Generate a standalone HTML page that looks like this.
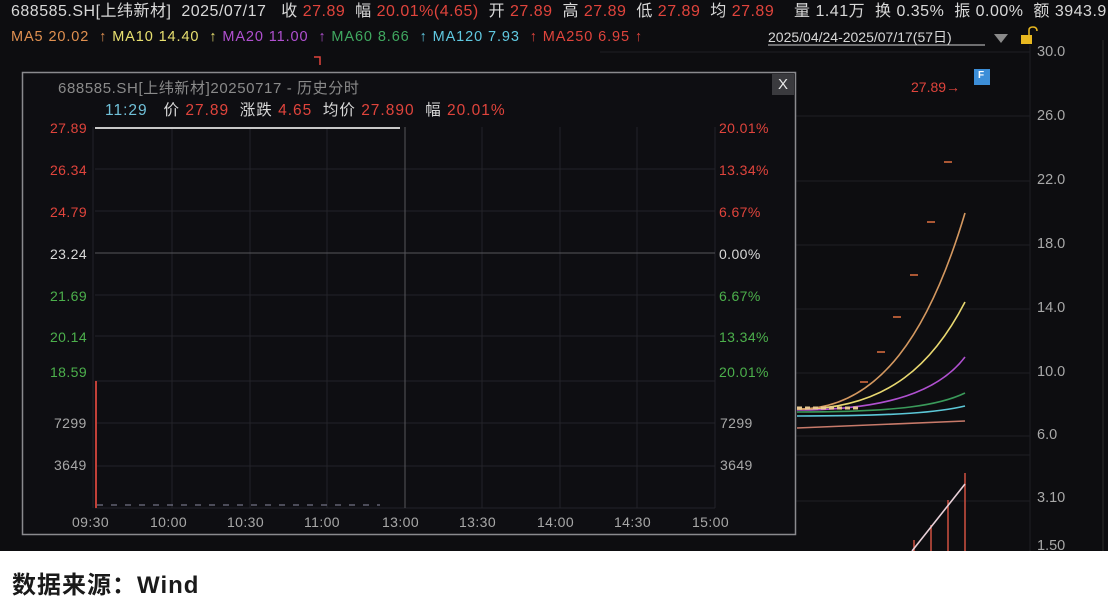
<!DOCTYPE html>
<html><head><meta charset="utf-8"><style>
*{margin:0;padding:0;box-sizing:border-box}
body{width:1108px;height:606px;overflow:hidden;background:#fff;font-family:"Liberation Sans","Noto Sans CJK SC",sans-serif;position:relative}
#dark{position:absolute;left:0;top:0;width:1108px;height:551px;background:#0d0d10}
.t{position:absolute;white-space:nowrap;line-height:1}
.w{color:#d8d8d8}.r{color:#e0443c}.g{color:#4cb04c}.gr{color:#a8a8a8}
.ax{font-size:14px;letter-spacing:0.4px}
svg{position:absolute;left:0;top:0}
</style></head><body>
<div id="dark"></div>
<svg width="1108" height="551">
 <g stroke="#1e1e24" stroke-width="1">
  <line x1="600" y1="52" x2="1030" y2="52"/><line x1="600" y1="116" x2="1030" y2="116"/>
  <line x1="796" y1="181" x2="1030" y2="181"/><line x1="796" y1="245" x2="1030" y2="245"/>
  <line x1="796" y1="309" x2="1030" y2="309"/><line x1="796" y1="373" x2="1030" y2="373"/>
  <line x1="796" y1="436" x2="1030" y2="436"/><line x1="796" y1="455" x2="1030" y2="455"/>
  <line x1="796" y1="501" x2="1030" y2="501"/>
  <line x1="1030" y1="45" x2="1030" y2="551"/>
 </g>
 <line x1="1103" y1="40" x2="1103" y2="551" stroke="#2a2a2a"/>
 <g fill="none" stroke-width="1.6">
  <path d="M797 428 L965 421" stroke="#c87a6a"/>
  <path d="M797 416 C900 416 940 412 965 406" stroke="#5cc8d8"/>
  <path d="M797 412 C900 412 940 405 965 393" stroke="#3a9a5a"/>
  <path d="M797 410 C890 410 940 390 965 357" stroke="#b050d0"/>
  <path d="M797 409 C890 410 935 360 965 302" stroke="#e8d870"/>
  <path d="M797 409 C880 410 930 330 965 213" stroke="#d49860"/>
 </g>
 <path d="M797 408 L860 408" stroke="#e8c890" stroke-width="3" stroke-dasharray="5 3"/>
 <g stroke="#e07040" stroke-width="1.5">
  <line x1="944" y1="162" x2="952" y2="162"/><line x1="927" y1="222" x2="935" y2="222"/>
  <line x1="910" y1="275" x2="918" y2="275"/><line x1="893" y1="317" x2="901" y2="317"/>
  <line x1="877" y1="352" x2="885" y2="352"/><line x1="860" y1="382" x2="868" y2="382"/>
 </g>
 <g stroke="#d05040" stroke-width="1.5">
  <line x1="965" y1="473" x2="965" y2="551"/><line x1="948" y1="500" x2="948" y2="551"/>
  <line x1="931" y1="525" x2="931" y2="551"/><line x1="914" y1="540" x2="914" y2="551"/>
 </g>
 <path d="M912 551 L965 484" stroke="#e8d0d8" stroke-width="1.6" fill="none"/>
 <path d="M314 57 L320 57 L320 65" stroke="#e0443c" fill="none" stroke-width="1.5"/>
 <rect x="22.5" y="72.5" width="773" height="462" fill="#0e0e12" stroke="#8a8a8e" stroke-width="1.5"/>
 <rect x="772" y="74" width="22" height="21" fill="#3a3a3e"/>
 <g stroke="#232329" stroke-width="1">
  <line x1="95" y1="169" x2="715" y2="169"/><line x1="95" y1="211" x2="715" y2="211"/>
  <line x1="95" y1="295" x2="715" y2="295"/><line x1="95" y1="336" x2="715" y2="336"/>
  <line x1="95" y1="381" x2="715" y2="381"/>
  <line x1="95" y1="423" x2="715" y2="423"/><line x1="95" y1="466" x2="715" y2="466"/>
  <line x1="95" y1="508" x2="715" y2="508"/>
  <line x1="172" y1="127" x2="172" y2="508"/><line x1="250" y1="127" x2="250" y2="508"/>
  <line x1="327" y1="127" x2="327" y2="508"/><line x1="482" y1="127" x2="482" y2="508"/>
  <line x1="560" y1="127" x2="560" y2="508"/><line x1="637" y1="127" x2="637" y2="508"/>
  <line x1="715" y1="127" x2="715" y2="508"/><line x1="93" y1="127" x2="93" y2="508"/>
 </g>
 <line x1="405" y1="127" x2="405" y2="508" stroke="#55555a"/>
 <line x1="95" y1="253" x2="715" y2="253" stroke="#55555a"/>
 <line x1="95" y1="128" x2="400" y2="128" stroke="#c8c8c8" stroke-width="2"/>
 <line x1="96" y1="381" x2="96" y2="508" stroke="#c04038" stroke-width="2"/>
 <path d="M97 505 L380 505" stroke="#8a8aa0" stroke-width="1" stroke-dasharray="6 8"/>
 <rect x="974" y="69" width="16" height="16" fill="#3c8ed8"/>
 <rect x="1021" y="35" width="11" height="9" fill="#e8b820"/>
 <path d="M1029 35 L1029 30 Q1029 27 1033 27 Q1037 27 1037 31" stroke="#e8b820" stroke-width="1.5" fill="none"/>
 <path d="M994 34 L1008 34 L1001 43 Z" fill="#8a8a8a"/>
 <line x1="768" y1="45" x2="985" y2="45" stroke="#d0d0d0"/>
</svg>
<div class="t" style="left:11px;top:4px;font-size:16px;letter-spacing:0.5px">
<span class="w">688585.SH[上纬新材]&nbsp; 2025/07/17&nbsp;&nbsp; 收 </span><span class="r">27.89</span><span class="w">&nbsp; 幅 </span><span class="r">20.01%(4.65)</span><span class="w">&nbsp; 开 </span><span class="r">27.89</span><span class="w">&nbsp; 高 </span><span class="r">27.89</span><span class="w">&nbsp; 低 </span><span class="r">27.89</span><span class="w">&nbsp; 均 </span><span class="r">27.89</span><span class="w">&nbsp;&nbsp;&nbsp; 量 1.41万&nbsp; 换 0.35%&nbsp; 振 0.00%&nbsp; 额 3943.9</span></div>
<div class="t" style="left:11px;top:30px;font-size:14.5px;letter-spacing:0.9px">
<span style="color:#e09050">MA5 20.02</span>&nbsp; <span style="color:#e09050">↑</span> <span style="color:#e8e070">MA10 14.40</span>&nbsp; <span style="color:#e8e070">↑</span> <span style="color:#b050d0">MA20 11.00</span>&nbsp; <span style="color:#b050d0">↑</span> <span style="color:#40a860">MA60 8.66</span>&nbsp; <span style="color:#60c8e0">↑</span> <span style="color:#60c8e0">MA120 7.93</span>&nbsp; <span style="color:#e0443c">↑ MA250 6.95 ↑</span></div>
<div class="t w" style="left:768px;top:30px;font-size:14px">2025/04/24-2025/07/17(57日)</div>
<div class="t gr" style="left:1037px;top:45px;font-size:14.5px">30.0</div>
<div class="t gr" style="left:1037px;top:109px;font-size:14.5px">26.0</div>
<div class="t gr" style="left:1037px;top:173px;font-size:14.5px">22.0</div>
<div class="t gr" style="left:1037px;top:237px;font-size:14.5px">18.0</div>
<div class="t gr" style="left:1037px;top:301px;font-size:14.5px">14.0</div>
<div class="t gr" style="left:1037px;top:365px;font-size:14.5px">10.0</div>
<div class="t gr" style="left:1037px;top:428px;font-size:14.5px">6.0</div>
<div class="t gr" style="left:1037px;top:491px;font-size:14.5px">3.10</div>
<div class="t gr" style="left:1037px;top:539px;font-size:14.5px">1.50</div>
<div class="t r" style="left:911px;top:80px;font-size:14px">27.89→</div>
<div class="t" style="left:978px;top:71px;font-size:10px;color:#fff;font-weight:bold">F</div>
<div class="t" style="left:58px;top:81px;font-size:15px;letter-spacing:0.6px;color:#8a8a8a">688585.SH[上纬新材]20250717 - 历史分时</div>
<div class="t" style="left:778px;top:77px;font-size:15px;color:#e8e8e8">X</div>
<div class="t" style="left:105px;top:103px;font-size:15.5px;letter-spacing:1px"><span style="color:#70c0d8">11:29</span><span class="w">&nbsp;&nbsp; 价 </span><span class="r">27.89</span><span class="w">&nbsp; 涨跌 </span><span class="r">4.65</span><span class="w">&nbsp; 均价 </span><span class="r">27.890</span><span class="w">&nbsp; 幅 </span><span class="r">20.01%</span></div>
<div class="t r ax" style="left:50px;top:121px">27.89</div>
<div class="t r ax" style="left:50px;top:163px">26.34</div>
<div class="t r ax" style="left:50px;top:205px">24.79</div>
<div class="t w ax" style="left:50px;top:247px">23.24</div>
<div class="t g ax" style="left:50px;top:289px">21.69</div>
<div class="t g ax" style="left:50px;top:330px">20.14</div>
<div class="t g ax" style="left:50px;top:365px">18.59</div>
<div class="t r ax" style="left:719px;top:121px">20.01%</div>
<div class="t r ax" style="left:719px;top:163px">13.34%</div>
<div class="t r ax" style="left:719px;top:205px">6.67%</div>
<div class="t w ax" style="left:719px;top:247px">0.00%</div>
<div class="t g ax" style="left:719px;top:289px">6.67%</div>
<div class="t g ax" style="left:719px;top:330px">13.34%</div>
<div class="t g ax" style="left:719px;top:365px">20.01%</div>
<div class="t gr ax" style="left:54px;top:416px">7299</div>
<div class="t gr ax" style="left:54px;top:458px">3649</div>
<div class="t gr ax" style="left:720px;top:416px">7299</div>
<div class="t gr ax" style="left:720px;top:458px">3649</div>
<div class="t gr ax" style="left:72px;top:515px">09:30</div>
<div class="t gr ax" style="left:150px;top:515px">10:00</div>
<div class="t gr ax" style="left:227px;top:515px">10:30</div>
<div class="t gr ax" style="left:304px;top:515px">11:00</div>
<div class="t gr ax" style="left:382px;top:515px">13:00</div>
<div class="t gr ax" style="left:459px;top:515px">13:30</div>
<div class="t gr ax" style="left:537px;top:515px">14:00</div>
<div class="t gr ax" style="left:614px;top:515px">14:30</div>
<div class="t gr ax" style="left:692px;top:515px">15:00</div>
<div class="t" style="left:12px;top:574px;font-size:24px;letter-spacing:1px;color:#1a1a1a;font-weight:600">数据来源：Wind</div>
</body></html>
